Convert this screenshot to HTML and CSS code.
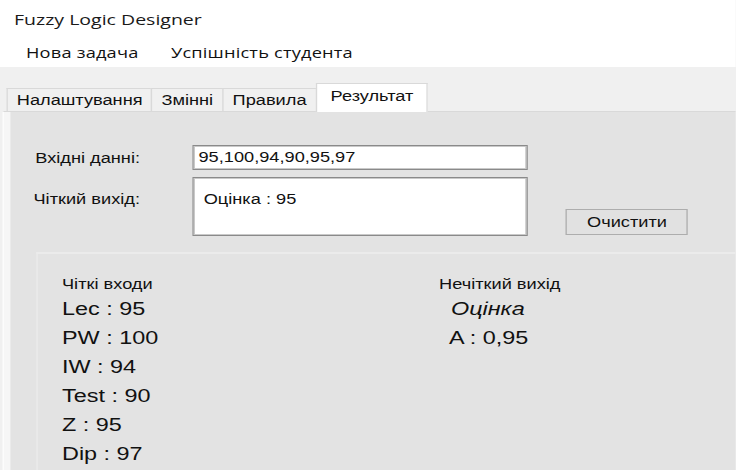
FILE: index.html
```html
<!DOCTYPE html>
<html lang="uk">
<head>
<meta charset="utf-8">
<title>Fuzzy Logic Designer</title>
<link rel="stylesheet" href="styles.css">
</head>
<body>
<div class="window">
  <header class="chrome">
    <div class="title">Fuzzy Logic Designer</div>
    <nav class="menu">
      <span class="menu-item">Нова задача</span>
      <span class="menu-item">Успішність студента</span>
    </nav>
  </header>

  <div class="tabs">
    <div class="tab">Налаштування</div>
    <div class="tab">Змінні</div>
    <div class="tab">Правила</div>
    <div class="tab active">Результат</div>
  </div>

  <section class="page">
    <div class="content">
      <div class="form">
        <div class="row">
          <label class="label">Вхідні данні:</label>
          <div class="field">95,100,94,90,95,97</div>
        </div>
        <div class="row row-out">
          <label class="label">Чіткий вихід:</label>
          <div class="memo">Оцінка : 95</div>
          <button class="btn" type="button">Очистити</button>
        </div>
      </div>

      <div class="group">
        <div class="col col-in">
          <div class="caption">Чіткі входи</div>
          <div class="val">Lec : 95</div>
          <div class="val">PW : 100</div>
          <div class="val">IW : 94</div>
          <div class="val">Test : 90</div>
          <div class="val">Z : 95</div>
          <div class="val">Dip : 97</div>
        </div>
        <div class="col col-out">
          <div class="caption">Нечіткий вихід</div>
          <div class="val term">Оцінка</div>
          <div class="val grade">A : 0,95</div>
        </div>
      </div>
    </div>
  </section>
</div>
</body>
</html>
```

FILE: styles.css
```css
html, body {
  margin: 0;
  padding: 0;
  overflow: hidden;
  background: #f0f0f0;
}

/* the form is drawn stretched horizontally, like a widened window */
.window {
  width: 566px;
  height: 470px;
  transform: scaleX(1.3);
  transform-origin: 0 0;
  display: flex;
  flex-direction: column;
  font-family: "Liberation Sans", Arial, sans-serif;
  color: #111;
  overflow: hidden;
}

/* title + menu strip */
.chrome {
  flex: none;
  height: 67px;
  background: #fff;
  display: flex;
  flex-direction: column;
}

.title {
  height: 38px;
  line-height: 38px;
  padding-left: 10.8px;
  font-family: "Open Sans", "Noto Sans", sans-serif;
  font-size: 15px;
  color: #1a1a1a;
}

.menu {
  height: 29px;
  display: flex;
  align-items: center;
  gap: 25px;
  padding-left: 20px;
  font-family: "Open Sans", "Noto Sans", sans-serif;
  font-size: 14px;
  letter-spacing: 0.15px;
  color: #111;
}

/* tab strip */
.tabs {
  flex: none;
  height: 44px;
  display: flex;
  align-items: flex-end;
  padding-left: 5.4px;
  position: relative;
  z-index: 1;
}

.tab {
  height: 22px;
  line-height: 22px;
  padding: 0 7px;
  border: 1px solid #d9d9d9;
  border-bottom: none;
  margin-left: -1px;
  background: #f0f0f0;
  font-size: 14px;
  color: #111;
}

.tab:first-child {
  margin-left: 0;
  padding: 0 6.5px;
}

.tab.active {
  height: 26px;
  line-height: 24px;
  padding: 0 10.5px 2px;
  background: #fff;
  margin-bottom: -1px;
}

/* tab page */
.page {
  flex: 1;
  margin-left: 2px;
  border-top: 1px solid #d9d9d9;
  border-left: 1px solid #fdfdfd;
  background: #f6f6f6;
  padding-left: 4.7px;
  min-height: 0;
}

.content {
  height: 100%;
  background: #e3e3e3;
  display: flex;
  flex-direction: column;
}

.form {
  padding-top: 33px;
}

.row {
  display: flex;
  align-items: center;
  height: 25px;
}

.label {
  width: 100px;
  text-align: right;
  font-size: 14px;
  line-height: 16px;
  color: #111;
}

.field {
  margin-left: 40px;
  width: 258.5px;
  height: 25px;
  box-sizing: border-box;
  border: 1px solid #8a8a8a;
  box-shadow: inset 0 0 0 1px #c9c9c9;
  background: #fff;
  padding: 0 4px;
  font-size: 14px;
  line-height: 23px;
  color: #111;
}

.row-out {
  height: 59px;
  margin-top: 7px;
  align-items: flex-start;
}

.row-out .label {
  padding-top: 14px;
}

.memo {
  margin-left: 40px;
  width: 258.5px;
  height: 59px;
  box-sizing: border-box;
  border: 1px solid #8a8a8a;
  box-shadow: inset 0 0 0 1px #c9c9c9;
  background: #fff;
  padding: 13px 8px 0;
  font-size: 14px;
  line-height: 16px;
  color: #111;
}

.btn {
  margin: 32px 0 0 29.2px;
  width: 93.8px;
  height: 26px;
  box-sizing: border-box;
  border: 1px solid #adadad;
  background: #e1e1e1;
  padding: 0;
  font-family: "Liberation Sans", Arial, sans-serif;
  font-size: 14px;
  color: #111;
}

/* result group */
.group {
  flex: 1;
  margin: 16px 0 0 20px;
  border-top: 2px solid #ebebeb;
  border-left: 1px solid #ebebeb;
  padding: 19.5px 0 0 19px;
  display: flex;
}

.col-in {
  width: 290px;
}

.caption {
  font-size: 14px;
  line-height: 21px;
  color: #111;
}

.val {
  font-size: 18px;
  line-height: 29px;
  color: #111;
}

.term {
  font-style: italic;
  padding-left: 9.2px;
}

.grade {
  padding-left: 7.7px;
}
```
